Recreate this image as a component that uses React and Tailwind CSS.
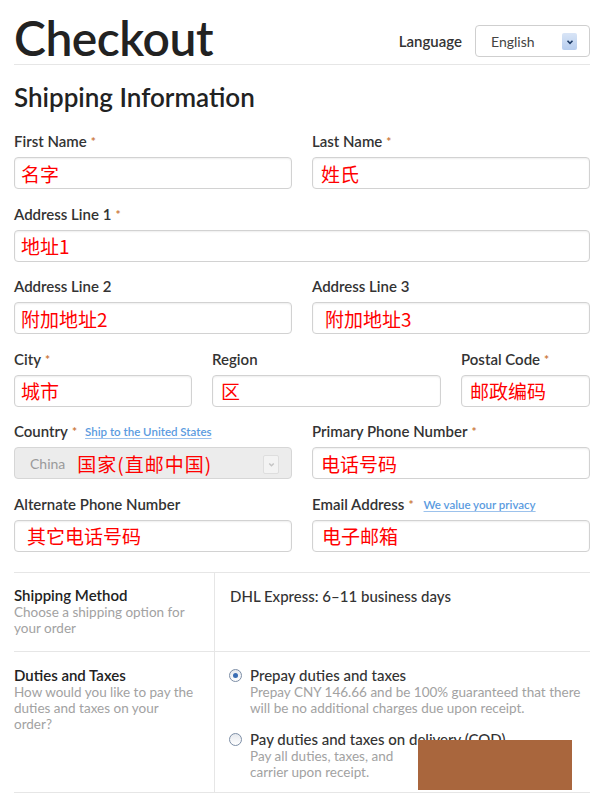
import React from 'react';

const cjk = "font-['SimSun','Noto_Sans_CJK_SC',sans-serif]";

function Req() {
  return <span className="relative top-[1px] ml-[4px] text-[12px] font-bold text-[#cc7a3e]">*</span>;
}

function Field({ label, required, extra, children }) {
  return (
    <div className="flex flex-col">
      <div className="flex h-[20px] items-center text-[15px] font-semibold leading-[20px] text-[#333]">
        <span>{label}</span>
        {required && <Req />}
        {extra}
      </div>
      <div className="mt-[6px]">{children}</div>
    </div>
  );
}

function Input({ value, pad = 'pl-[6px]' }) {
  return (
    <div className={`flex h-[32px] items-center rounded-[4px] border border-[#d2d2d2] bg-white shadow-[inset_0_1px_2px_rgba(0,0,0,0.07)] ${pad}`}>
      <span className={`${cjk} text-[19px] leading-none text-[#ff0000]`}>{value}</span>
    </div>
  );
}

function Chevron({ className }) {
  return (
    <svg viewBox="0 0 10 10" className={className} fill="none" stroke="currentColor" strokeWidth="1.6">
      <path d="M2.5 3.8 5 6.3 7.5 3.8" />
    </svg>
  );
}

function Radio({ checked }) {
  return (
    <span className="mt-[3px] flex h-[13px] w-[13px] shrink-0 items-center justify-center rounded-full border border-[#7d8ea6] bg-gradient-to-b from-[#e6e9ee] to-white">
      {checked && <span className="h-[5px] w-[5px] rounded-full bg-[#3a6db3]" />}
    </span>
  );
}

export default function App() {
  return (
    <div className="relative h-[795px] w-[600px] overflow-hidden bg-white pl-[14px] pr-[10px] font-['Lato',sans-serif] text-[#333]">
      {/* Header */}
      <div className="flex h-[65px] items-start justify-between border-b border-[#e6e6e6]">
        <h1 className="mt-[14px] text-[48px] font-semibold leading-[48px] tracking-[-0.5px] text-[#222]">Checkout</h1>
        <div className="mt-[25px] flex items-center gap-[13px]">
          <span className="text-[15px] font-semibold text-[#333]">Language</span>
          <div className="relative flex h-[32px] w-[115px] items-center rounded-[4px] border border-[#cfcfcf] bg-white pl-[15px]">
            <span className="text-[14px] text-[#444]">English</span>
            <span className="absolute right-[12px] top-[7px] flex h-[17px] w-[15px] items-center justify-center rounded-[2px] bg-gradient-to-b from-[#d9e5f6] to-[#b7cdee] text-[#1d3b66]">
              <Chevron className="h-[10px] w-[10px]" />
            </span>
          </div>
        </div>
      </div>

      <h2 className="mt-[17px] text-[26px] font-semibold leading-[30px] text-[#222]">Shipping Information</h2>

      {/* Form */}
      <div className="mt-[19px] flex flex-col gap-y-[14.5px]">
        <div className="grid grid-cols-2 gap-x-[20px]">
          <Field label="First Name" required><Input value="名字" /></Field>
          <Field label="Last Name" required><Input value="姓氏" pad="pl-[8px]" /></Field>
        </div>
        <Field label="Address Line 1" required><Input value="地址1" /></Field>
        <div className="grid grid-cols-2 gap-x-[20px]">
          <Field label="Address Line 2"><Input value="附加地址2" /></Field>
          <Field label="Address Line 3"><Input value="附加地址3" pad="pl-[12px]" /></Field>
        </div>
        <div className="grid grid-cols-[178px_229px_129px] gap-x-[20px]">
          <Field label="City" required><Input value="城市" /></Field>
          <Field label="Region"><Input value="区" pad="pl-[8px]" /></Field>
          <Field label="Postal Code" required><Input value="邮政编码" pad="pl-[8px]" /></Field>
        </div>
        <div className="grid grid-cols-2 gap-x-[20px]">
          <Field
            label="Country"
            required
            extra={<a className="ml-[8px] mt-[2px] text-[11.5px] font-semibold text-[#5b9be0] underline decoration-[#9cc2ec] underline-offset-2">Ship to the United States</a>}
          >
            <div className="relative flex h-[32px] items-center rounded-[4px] border border-[#d6d6d6] bg-[#ececec] pl-[15px]">
              <span className="text-[14px] text-[#9a9a9a]">China</span>
              <span className={`${cjk} ml-[12px] text-[19px] leading-none tracking-[1px] text-[#ff0000]`}>国家(直邮中国)</span>
              <span className="absolute right-[12px] top-[7px] flex h-[19px] w-[16px] items-center justify-center rounded-[2px] border border-[#dedede] bg-[#f3f3f3] text-[#c4c4c4]">
                <Chevron className="h-[9px] w-[9px]" />
              </span>
            </div>
          </Field>
          <Field label="Primary Phone Number" required><Input value="电话号码" pad="pl-[8px]" /></Field>
        </div>
        <div className="grid grid-cols-2 gap-x-[20px]">
          <Field label="Alternate Phone Number"><Input value="其它电话号码" pad="pl-[12px]" /></Field>
          <Field
            label="Email Address"
            required
            extra={<a className="ml-[10px] mt-[2px] text-[11.5px] font-semibold text-[#5b9be0] underline decoration-[#9cc2ec] underline-offset-2">We value your privacy</a>}
          >
            <Input value="电子邮箱" pad="pl-[9px]" />
          </Field>
        </div>
      </div>

      {/* Options */}
      <div className="mt-[20px] border-y border-[#e6e6e6]">
        <div className="grid grid-cols-[201px_1fr] border-b border-[#e6e6e6]">
          <div className="h-[78px] border-r border-[#e6e6e6] pt-[13px]">
            <div className="text-[15px] font-semibold leading-[18px] text-[#222]">Shipping Method</div>
            <div className="w-[182px] text-[13.5px] leading-[16px] text-[#a2a2a2]">Choose a shipping option for your order</div>
          </div>
          <div className="pl-[15px] pt-[14px] text-[15px] font-medium leading-[18px] text-[#333]">DHL Express: 6–11 business days</div>
        </div>
        <div className="grid grid-cols-[201px_1fr]">
          <div className="h-[140px] border-r border-[#e6e6e6] pt-[14px]">
            <div className="text-[15px] font-semibold leading-[18px] text-[#222]">Duties and Taxes</div>
            <div className="w-[182px] text-[13.5px] leading-[16px] text-[#a2a2a2]">How would you like to pay the duties and taxes on your order?</div>
          </div>
          <div className="flex flex-col gap-[14px] pl-[14px] pt-[14px]">
            <div className="flex gap-[8px]">
              <Radio checked />
              <div>
                <div className="text-[15px] font-medium leading-[18px] text-[#333]">Prepay duties and taxes</div>
                <div className="text-[13.5px] leading-[16px] text-[#a2a2a2]">Prepay CNY 146.66 and be 100% guaranteed that there will be no additional charges due upon receipt.</div>
              </div>
            </div>
            <div className="flex gap-[8px]">
              <Radio />
              <div>
                <div className="text-[15px] font-medium leading-[18px] text-[#333]">Pay duties and taxes on delivery (COD)</div>
                <div className="w-[150px] text-[13.5px] leading-[16px] text-[#a2a2a2]">Pay all duties, taxes, and carrier upon receipt.</div>
              </div>
            </div>
          </div>
        </div>
      </div>

      {/* redaction block over the screenshot */}
      <div className="absolute left-[418px] top-[740px] h-[50px] w-[154px] bg-[#a9663d]" />
    </div>
  );
}
